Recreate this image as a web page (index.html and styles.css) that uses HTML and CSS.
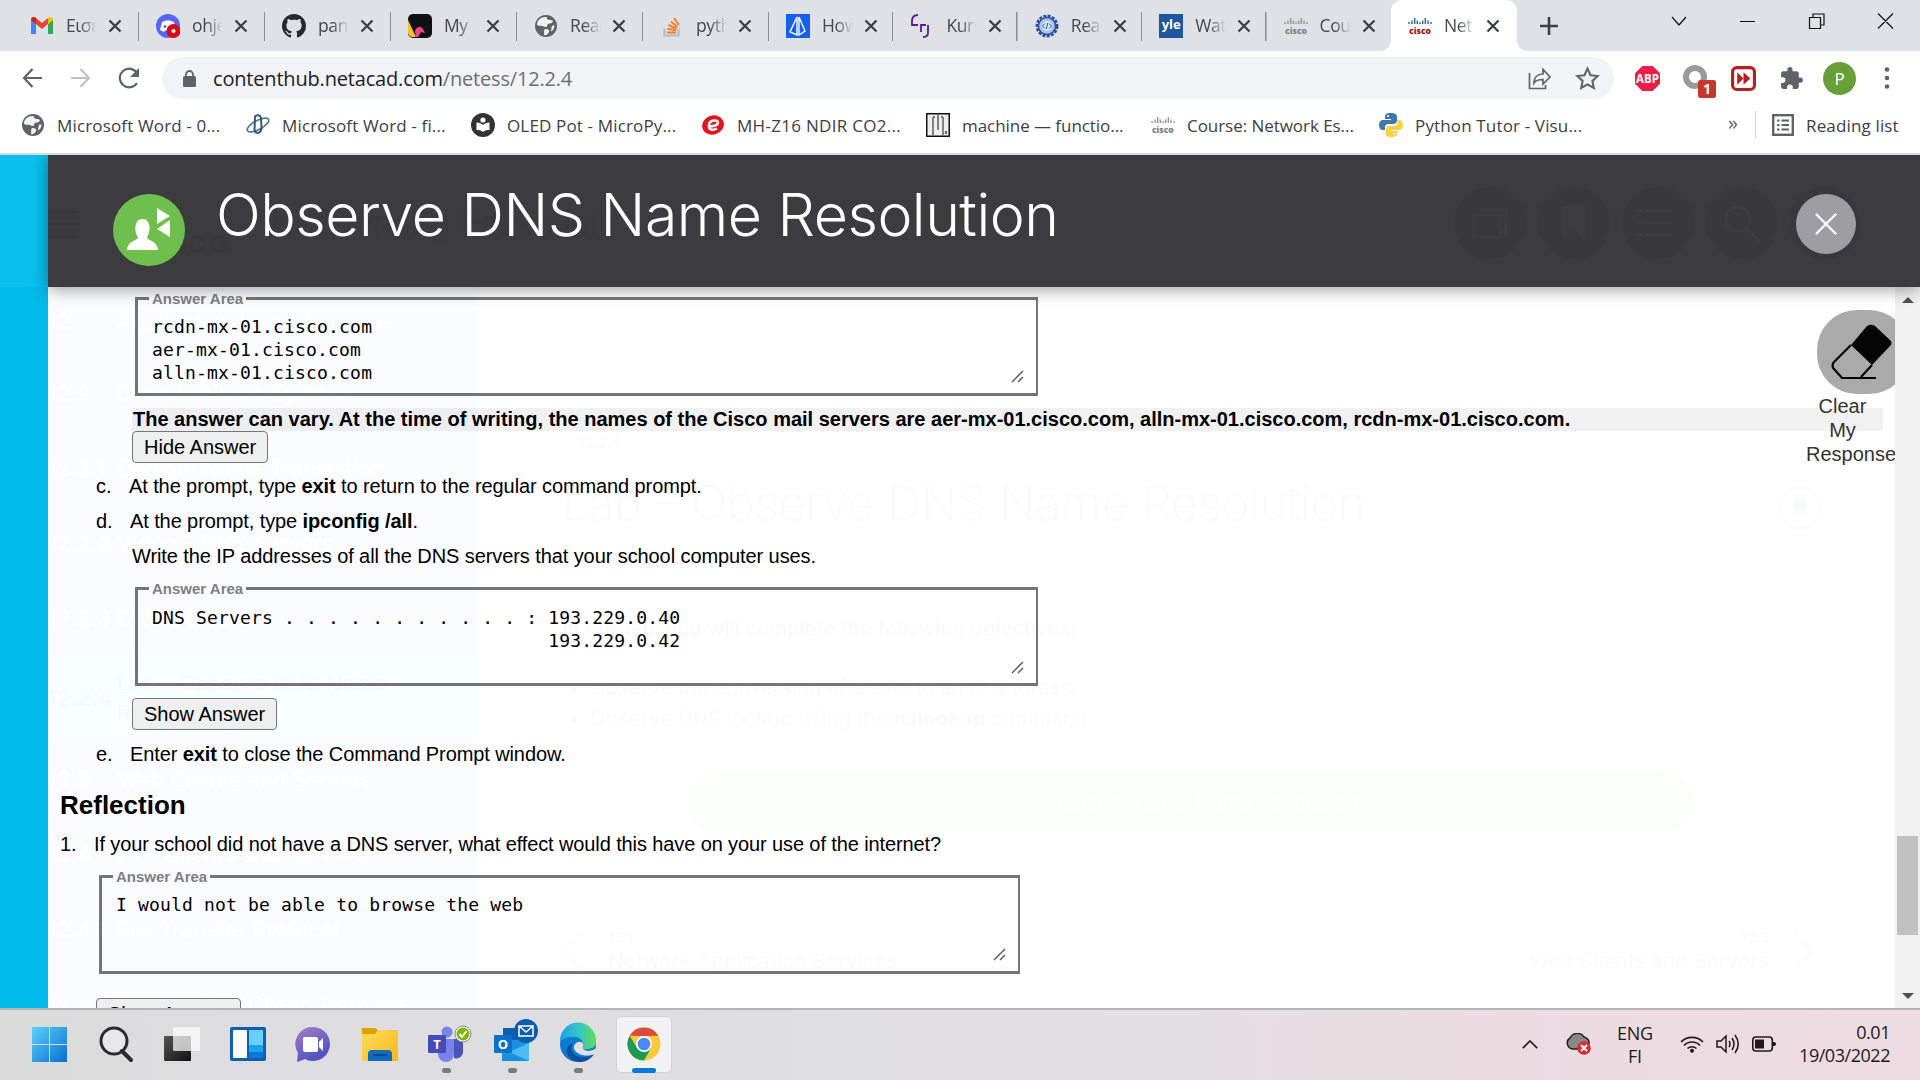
FILE: index.html
```html
<!DOCTYPE html>
<html lang="en">
<head>
<meta charset="utf-8">
<title>Networking Essentials</title>
<link rel="stylesheet" href="styles.css">
</head>
<body>
<svg width="0" height="0" class="defs">
  <defs>
    <symbol id="x" viewBox="0 0 14 14"><path d="M1.500 1.500l11 11M12.500 1.500l-11 11" stroke="#3c4043" stroke-width="2.300" fill="none"/></symbol>
    <symbol id="globe" viewBox="0 0 24 24"><circle cx="12" cy="12" r="11" fill="#5f6368"/><path d="M13 3c-1 2 1 3 4 3l2 1c-1 3-3 2-5 3s0 3-2 3-3-2-6-1l-3-1c0-5 4-8.500 10-8zM11 15c3 0 5 1 4 3s-3 4-5 3c1-2-1-3 1-6zM18.500 11.500l2 0c0 3-1.500 5-3.500 6 .500-2 0-4 1.500-6z" fill="#fff" opacity=".92"/></symbol>
    <symbol id="cisco" viewBox="0 0 24 24"><path d="M1 6v2M4 4.500V8M6.700 2v6M9.300 4.500V8M12 6v2M14.700 4.500V8M17.300 2v6M20 4.500V8M23 6v2" stroke="currentColor" stroke-width="1.300" transform="translate(0 2)"/><text x="12" y="19.500" font-family="Open Sans" font-size="8.600" font-weight="800" text-anchor="middle" textLength="22">cisco</text></symbol>
    <symbol id="user" viewBox="0 0 72 72"><path d="M25 43c-4-5-4-18 4.500-18s8.500 13 4.500 18c0 4 10 3 11 13H14c1-10 11-9 11-13z"/><path d="M44 14l13 8-13 8zM57 26v17l-13-8z"/></symbol>
    <symbol id="grip" viewBox="0 0 13 13"><path d="M1 12L12 1M7 12l5-5" stroke="#555" stroke-width="1.400"/></symbol>
  </defs>
</svg>

<div class="tabs">
  <div class="tab"><svg class="ic" viewBox="0 0 24 24"><path d="M1 20V6l5 4v10z" fill="#4285f4"/><path d="M18 20V10l5-4v14z" fill="#34a853"/><path d="M1 6c0-3 3-4 5-2l6 5 6-5v6l-6 5-6-5z" fill="#ea4335"/><path d="M1 6c0-3 3-4 5-2v6z" fill="#c5221f"/><path d="M18 4c2-2 5-1 5 2l-5 4z" fill="#fbbc04"/></svg><span class="tt">Εισε</span><svg class="x"><use href="#x"/></svg></div>
  <div class="tab"><svg class="ic" viewBox="0 0 24 24"><circle cx="12" cy="12" r="12" fill="#5865f2"/><path d="M6 8l4-1.500h4l4 1.500 2 8-4 2-1-1.500H9L8 18l-4-2z" fill="#fff"/><circle cx="9" cy="12.500" r="1.500" fill="#5865f2"/><circle cx="17.500" cy="17" r="7" fill="#dd0a14"/><circle cx="17.500" cy="17" r="2" fill="#fff"/></svg><span class="tt">ohje</span><svg class="x"><use href="#x"/></svg></div>
  <div class="tab"><svg class="ic" viewBox="0 0 16 16"><path fill="#24292f" d="M8 0C3.580 0 0 3.580 0 8c0 3.540 2.290 6.530 5.470 7.590.4.070.55-.17.55-.38 0-.19-.01-.82-.01-1.490-2.010.37-2.530-.49-2.690-.94-.09-.23-.48-.94-.82-1.130-.28-.15-.68-.52-.01-.53.63-.01 1.080.58 1.230.82.72 1.210 1.870.87 2.330.66.070-.52.28-.87.51-1.070-1.780-.2-3.640-.89-3.640-3.950 0-.87.31-1.590.82-2.150-.08-.2-.36-1.020.08-2.120 0 0 .67-.21 2.200.82.64-.18 1.320-.27 2-.27s1.360.09 2 .27c1.530-1.040 2.200-.82 2.200-.82.44 1.100.16 1.920.08 2.120.51.56.82 1.270.82 2.150 0 3.070-1.870 3.750-3.650 3.950.29.25.54.73.54 1.480 0 1.070-.01 1.930-.01 2.200 0 .21.150.46.55.38A8 8 0 0 0 16 8c0-4.420-3.580-8-8-8z"/></svg><span class="tt">pan</span><svg class="x"><use href="#x"/></svg></div>
  <div class="tab"><svg class="ic" viewBox="0 0 24 24"><rect width="24" height="24" rx="5" fill="#111"/><path d="M0 6l8 17H5c-3 0-5-2-5-5z" fill="#fbc02d"/><path d="M7 18c0-4 5-7 8-3l2 4-4-1-3 5H8z" fill="#f0418c"/></svg><span class="tt">My</span><svg class="x"><use href="#x"/></svg></div>
  <div class="tab"><svg class="ic"><use href="#globe"/></svg><span class="tt">Read</span><svg class="x"><use href="#x"/></svg></div>
  <div class="tab"><svg class="ic" viewBox="0 0 24 24"><path d="M4.500 14.500v7h14v-7" stroke="#bcbbbb" stroke-width="2.200" fill="none"/><path d="M7 18.500h9M7.300 14.800l8.800 1.500M8.500 11l8 3.500M10.800 7.400l6.700 5.500M14 4l5 7" stroke="#f48024" stroke-width="2"/></svg><span class="tt">pyth</span><svg class="x"><use href="#x"/></svg></div>
  <div class="tab"><svg class="ic" viewBox="0 0 24 24"><rect width="24" height="24" fill="#1660f0"/><path d="M11 3L4 18l7 3zM13 3l6 14-6 4z" fill="none" stroke="#fff" stroke-width="1.400"/></svg><span class="tt">How</span><svg class="x"><use href="#x"/></svg></div>
  <div class="tab"><svg class="ic" viewBox="0 0 24 24"><path d="M8 1C4 1 2 3 2 7v4h6M11 18v-7h5M18 11v8c0 3-2 4-5 4" fill="none" stroke="#5b1a96" stroke-width="1.800"/></svg><span class="tt">Kurs</span><svg class="x"><use href="#x"/></svg></div>
  <div class="tab"><svg class="ic" viewBox="0 0 24 24"><circle cx="12" cy="12" r="10.200" fill="none" stroke="#2c4a9c" stroke-width="2.400" stroke-dasharray="3 1.400"/><circle cx="12" cy="12" r="8.600" fill="#a9c3ea" stroke="#2c4a9c" stroke-width="1.500"/><circle cx="12" cy="12" r="5" fill="#dbe7fa"/><path d="M10 9.500L7.500 12l2.500 2.500M14 9.500l2.500 2.500-2.500 2.500M12.700 9l-1.400 6" stroke="#2c4a9c" fill="none"/></svg><span class="tt">Real</span><svg class="x"><use href="#x"/></svg></div>
  <div class="tab"><span class="ic yle">yle</span><span class="tt">Wat</span><svg class="x"><use href="#x"/></svg></div>
  <div class="tab last"><svg class="ic cg"><use href="#cisco"/></svg><span class="tt">Cou</span><svg class="x"><use href="#x"/></svg></div>
  <div class="tab active"><svg class="ic cc"><use href="#cisco"/></svg><span class="tt">Net</span><svg class="x"><use href="#x"/></svg></div>
  <svg class="plus" viewBox="0 0 18 18"><path d="M9 0v18M0 9h18" stroke="#3c4043" stroke-width="2.600"/></svg>
  <svg class="wc" viewBox="0 0 224 20"><path d="M1 6l7 8 7-8M69 10.500h15M207 2.500l15 15M222 2.500l-15 15M138.500 6.500h11v11h-11zM142 6V3h11v11h-3" fill="none" stroke="#111" stroke-width="1.200"/></svg>
</div>

<div class="bar">
  <svg class="nav" viewBox="0 0 120 24"><g fill="none" stroke-width="2.200"><path d="M20 12H2M10.500 3L2 12l8.500 9" stroke="#5f6368"/><path d="M49 12h18M58.500 3L67 12l-8.500 9" stroke="#bdc1c6"/><path d="M115 17a9.300 9.300 0 1 1 0-10" stroke="#5f6368"/></g><path d="M117 2v9h-9z" fill="#5f6368"/></svg>
  <div class="omni">
    <svg class="lock" viewBox="0 0 13 17"><rect y="6" width="13" height="11" rx="1.500" fill="#5f6368"/><path d="M3 7V4.500a3.500 3.500 0 0 1 7 0V7" fill="none" stroke="#5f6368" stroke-width="1.800"/></svg>
    <span class="url">contenthub.netacad.com<i>/netess/12.2.4</i></span>
    <svg class="share" viewBox="0 0 24 24"><path d="M1.500 7v15.500h16V19M6 17c0-6 4-9 9-9V3.500l7 7.500-7 7v-4.500c-4 0-7 .5-9 3.500z" fill="none" stroke="#5f6368" stroke-width="1.700"/></svg>
    <svg class="star" viewBox="0 0 24 24"><path d="M12 2.500l2.900 6.300 6.800.8-5 4.700 1.300 6.700-6-3.400-6 3.400 1.300-6.700-5-4.700 6.800-.8z" fill="none" stroke="#5f6368" stroke-width="2"/></svg>
  </div>
  <div class="ext">
    <svg viewBox="0 0 24 24"><path d="M7 0h10l7 7v10l-7 7H7l-7-7V7z" fill="#ed1e45"/><text x="12" y="16.500" font-family="Open Sans" font-size="12" font-weight="700" fill="#fff" text-anchor="middle" textLength="22" lengthAdjust="spacingAndGlyphs">ABP</text></svg>
    <svg class="rec" viewBox="0 0 34 36"><circle cx="12" cy="14" r="9" fill="none" stroke="#9a9a9a" stroke-width="6"/><rect x="15" y="17" width="18" height="18" rx="2.500" fill="#c5372c"/><text x="24" y="31" font-family="Open Sans" font-size="14" font-weight="700" fill="#fff" text-anchor="middle">1</text></svg>
    <svg viewBox="0 0 24 24"><rect x="1.500" y="1.500" width="21" height="21" rx="4" fill="#fff" stroke="#b5201c" stroke-width="3"/><path d="M6 6l6 6-6 6zM12 6l6.500 6-6.500 6z" fill="#b5201c"/></svg>
    <svg viewBox="0 0 24 24"><path fill="#5f6368" d="M20.500 11H19V7a2 2 0 0 0-2-2h-4V3.500a2.500 2.500 0 0 0-5 0V5H4a2 2 0 0 0-2 2v3.800h1.500a2.700 2.700 0 0 1 0 5.400H2V20a2 2 0 0 0 2 2h3.800v-1.500a2.700 2.700 0 0 1 5.400 0V22H17a2 2 0 0 0 2-2v-4h1.500a2.500 2.500 0 0 0 0-5z"/></svg>
    <span class="me">P</span>
    <svg class="dots" viewBox="0 0 6 22"><g fill="#5f6368"><circle cx="3" cy="2.500" r="2.300"/><circle cx="3" cy="11" r="2.300"/><circle cx="3" cy="19.500" r="2.300"/></g></svg>
  </div>
</div>

<div class="marks">
  <div class="mk"><svg class="ic"><use href="#globe"/></svg><span>Microsoft Word - 0...</span></div>
  <div class="mk"><svg class="ic" viewBox="0 0 24 24"><g fill="none" stroke="#4b7391" stroke-width="1.600"><ellipse cx="12" cy="12" rx="12" ry="4.500" transform="rotate(-28 12 12)"/><path d="M9 3.500c2-2 5-1.500 6 1l.5 11c-1 5-5 6-7 2z" stroke="#2d5a7c" stroke-width="2"/></g></svg><span>Microsoft Word - fi...</span></div>
  <div class="mk"><svg class="ic" viewBox="0 0 24 24"><circle cx="12" cy="12" r="12" fill="#333"/><circle cx="12" cy="7" r="2.600" fill="#fff"/><path d="M5.500 9.500c3 0 5 1 6.500 2.500 1.500-1.500 3.500-2.500 6.500-2.500V17c-3 0-5 .5-6.500 2-1.500-1.500-3.500-2-6.500-2z" fill="#fff"/></svg><span>OLED Pot - MicroPy...</span></div>
  <div class="mk"><svg class="ic" viewBox="0 0 24 24"><ellipse cx="12" cy="12" rx="11" ry="9.500" fill="#e3151d" transform="rotate(-18 12 12)"/><path d="M7 13.500c4 0 10-1 10-4s-8-3-9 2 3 6.500 8 4" fill="none" stroke="#fff" stroke-width="2.500"/></svg><span class="wide">MH-Z16 NDIR CO2...</span></div>
  <div class="mk"><svg class="ic" viewBox="0 0 24 24"><rect x=".75" y=".75" width="22.500" height="22.500" fill="#eee" stroke="#111" stroke-width="1.500"/><path d="M7 4v19M12 1v16M17 4v19M7 4h2M15 4h2" stroke="#777" stroke-width="1.800"/><path d="M20 18v3" stroke="#333" stroke-width="1.500"/></svg><span class="tight">machine — functio...</span></div>
  <div class="mk"><svg class="ic cg"><use href="#cisco"/></svg><span class="tight">Course: Network Es...</span></div>
  <div class="mk"><svg class="ic" viewBox="0 0 24 24"><path d="M12 0c-5 0-6 1.500-6 3.500V6h6v1H4C1.500 7 0 9 0 12s1.500 5 4 5h2v-3c0-2 1.500-3 3.500-3h5c2 0 3.500-1.500 3.500-3.500v-4C18 1.500 16 0 12 0z" fill="#3c78aa"/><path d="M12 24c5 0 6-1.500 6-3.500V18h-6v-1h8c2.500 0 4-2 4-5s-1.500-5-4-5h-1.500v3c0 2-1.500 3-3.500 3h-5c-2 0-3.500 1.500-3.500 3.500v4C6.500 22.500 8 24 12 24z" fill="#fdd140"/><circle cx="9" cy="3" r="1.100" fill="#fff"/><circle cx="15" cy="21" r="1.100" fill="#fff"/></svg><span>Python Tutor - Visu...</span></div>
  <span class="more">»</span>
  <div class="rl"><svg class="ric" viewBox="0 0 22 22"><rect x="1.200" y="1.200" width="19.600" height="19.600" fill="none" stroke="#5f6368" stroke-width="2.400"/><path d="M5 6.500h2.500M9.500 6.500H17M5 11h2.500M9.500 11H17M5 15.500h2.500M9.500 15.500H17" stroke="#5f6368" stroke-width="2"/></svg><span>Reading list</span></div>
</div>

<div class="page">
  <div class="rail"></div>
  <header class="head">
    <svg class="ghosthead" viewBox="0 0 1872 132"><g fill="#39393b"><circle cx="1442" cy="68" r="36"/><circle cx="1526" cy="68" r="36"/><circle cx="1610" cy="68" r="36"/><circle cx="1694" cy="68" r="36"/><circle cx="1777" cy="68" r="36"/></g><g fill="none" stroke="#3d3d3f" stroke-width="3"><path d="M1426 60h26v22h-26zM1432 55h26v22h-4M1598 56h26M1598 68h26M1598 80h26M1588 56h6M1588 68h6M1588 80h6"/><circle cx="1690" cy="64" r="12"/><path d="M1698 73l13 13"/></g><path d="M1514 51h24v34l-12-10-12 10z" fill="#3d3d3f"/><path d="M0 57h31M0 69h31M0 82h31" stroke="#38383a" stroke-width="3"/><text x="222" y="80" font-family="Inter" font-weight="300" font-size="34" fill="#3a3a3c" textLength="345">Networking Essentials</text><text x="90" y="98" font-family="Inter" font-weight="800" font-size="32" fill="#39393b" textLength="90">cisco</text></svg>
    <div class="badge"><svg><use href="#user"/></svg></div>
    <h1>Observe DNS Name Resolution</h1>
    <div class="close"><svg viewBox="0 0 22 22"><path d="M1.500 1.500l19 19M20.500 1.500l-19 19" stroke="#fff" stroke-width="2.300" stroke-linecap="round"/></svg></div>
  </header>
  <div class="under">
    <div class="toc">
      <p><b>12</b>Application Layer Services</p>
      <p><b>12.2</b>Domain Name System</p>
      <p><b>12.2.1</b>Domain Name Translation</p>
      <p><b>12.2.2</b>Video – DNS Servers</p>
      <p><b>12.2.3</b>DNS Servers</p>
      <p class="cur"><b>12.2.4</b>Lab – Observe DNS Name<br>Resolution</p>
      <p><b>12.3</b>Web Clients and Servers</p>
      <p><b>12.4</b>FTP Clients and Servers</p>
      <p><b>12.4.1</b>File Transfer Protocol</p>
      <p><b>12.4.2</b>Video – FTP Client Software</p>
    </div>
    <div class="lesson">
      <small>12.2.4</small>
      <div class="lt"><span>Lab – Observe DNS Name Resolution</span><svg viewBox="0 0 44 44"><circle cx="22" cy="22" r="20.500" fill="none" stroke="#f9f9f9" stroke-width="1.500"/><path d="M16 13h12v16l-6-5-6 5z" fill="#f9fbfb"/></svg></div>
      <p class="obj">In this lab, you will complete the following objectives:</p>
      <ul><li>Observe the conversion of a URL to an IP address.</li><li>Observe DNS lookup using the <b>nslookup</b> command.</li></ul>
      <div class="pill"><svg><use href="#user"/></svg>Observe DNS Name Resolution</div>
      <div class="pn"><svg viewBox="0 0 24 42"><path d="M21 2L3 21l18 19" fill="none" stroke="#f9fbfc" stroke-width="2"/></svg><div><small>12.1</small>Network Application Services</div><div class="nx"><small>12.3</small>Web Clients and Servers</div><svg viewBox="0 0 24 42"><path d="M3 2l18 19L3 40" fill="none" stroke="#f9fbfc" stroke-width="2"/></svg></div>
    </div>
  </div>
  <main class="doc">
    <fieldset class="f1"><legend>Answer Area</legend><pre>rcdn-mx-01.cisco.com
aer-mx-01.cisco.com
alln-mx-01.cisco.com</pre><svg class="grip"><use href="#grip"/></svg></fieldset>
    <div class="ans">The answer can vary. At the time of writing, the names of the Cisco mail servers are aer-mx-01.cisco.com, alln-mx-01.cisco.com, rcdn-mx-01.cisco.com.</div>
    <button>Hide Answer</button>
    <p class="row"><em>c.</em><span>At the prompt, type <b>exit</b> to return to the regular command prompt.</span></p>
    <p class="row d"><em>d.</em><span>At the prompt, type <b>ipconfig /all</b>.</span></p>
    <p class="row w"><span>Write the IP addresses of all the DNS servers that your school computer uses.</span></p>
    <fieldset class="f2"><legend>Answer Area</legend><pre>DNS Servers . . . . . . . . . . . : 193.229.0.40
                                    193.229.0.42</pre><svg class="grip"><use href="#grip"/></svg></fieldset>
    <button class="b2">Show Answer</button>
    <p class="row d e"><em>e.</em><span>Enter <b>exit</b> to close the Command Prompt window.</span></p>
    <h2>Reflection</h2>
    <p class="row q"><em>1.</em><span>If your school did not have a DNS server, what effect would this have on your use of the internet?</span></p>
    <fieldset class="f3"><legend>Answer Area</legend><pre>I would not be able to browse the web</pre><svg class="grip"><use href="#grip"/></svg></fieldset>
    <button class="b3">Show Answer</button>
    <div class="clear"><div class="er"><svg viewBox="0 0 62 56"><path d="M36 2q4-2.500 8 0l15 14q3 3 0 6L41 41 20 21z" fill="#050505"/><path d="M20 21L3 38q-3 3.500 0 7l8 9h34M41 41L30 53" fill="none" stroke="#050505" stroke-width="2.200"/></svg></div><p>Clear My Response</p></div>
  </main>
  <div class="scroll"><svg viewBox="0 0 12 6"><path d="M0 6l6-6 6 6z" fill="#505050"/></svg><div class="thumb"></div><svg viewBox="0 0 12 6"><path d="M0 0l6 6 6-6z" fill="#505050"/></svg></div>
</div>

<footer class="task">
  <svg class="apps" viewBox="0 0 700 70" width="700" height="70">
    <defs>
      <linearGradient id="g0" gradientUnits="userSpaceOnUse" x1="32" y1="17" x2="67" y2="52"><stop stop-color="#5ad0fb"/><stop offset="1" stop-color="#0a6fd0"/></linearGradient>
      <linearGradient id="g2" y2="1" x2=".6"><stop stop-color="#a57fc8"/><stop offset="1" stop-color="#4a50c0"/></linearGradient>
      <linearGradient id="g3" y2="1" x2="1"><stop stop-color="#ffdc5c"/><stop offset="1" stop-color="#f9b71c"/></linearGradient>
      <linearGradient id="g4" x2="1"><stop stop-color="#1a9fe8"/><stop offset=".5" stop-color="#34c6c8"/><stop offset="1" stop-color="#62dc5a"/></linearGradient>
      <linearGradient id="g5" x2="1" y2="1"><stop stop-color="#555"/><stop offset="1" stop-color="#111"/></linearGradient>
    </defs>
    <path d="M32 17h17v17H32zM50 17h17v17H50zM32 35h17v17H32zM50 35h17v17H50z" fill="url(#g0)"/>
    <circle cx="114" cy="31" r="13" fill="#e8e8ea" stroke="#2b2b2b" stroke-width="3"/><path d="M122 41l9 9" stroke="#2b2b2b" stroke-width="4" stroke-linecap="round"/>
    <rect x="164" y="26" width="27" height="25" rx="1" fill="url(#g5)"/><rect x="173" y="17" width="27" height="24" rx="1" fill="#fff" opacity=".72"/>
    <rect x="230" y="17" width="36" height="34" rx="2" fill="#0f5fae"/><rect x="233" y="20" width="14" height="28" rx="1" fill="#fafafa"/><rect x="249" y="20" width="14" height="15" fill="#66d2fb"/><path d="M249 35h14v7h-14z" fill="#1fa0ee"/><path d="M249 42h14v6h-14z" fill="#0c78d8"/>
    <path d="M313 17a17 17 0 1 1-8 32l-8 3 1-9a17 17 0 0 1 15-26z" fill="url(#g2)"/><rect x="303" y="27" width="15" height="15" rx="2" fill="#fff"/><path d="M319 32l4-4v13l-4-4z" fill="#fff"/>
    <path d="M362 24h13l3-4h18a2 2 0 0 1 2 2v29h-36z" fill="url(#g3)"/><path d="M362 18h13l3 2-3 4h-13z" fill="#e0a100"/><path d="M368 51v-7a4 4 0 0 1 4-4h16a4 4 0 0 1 4 4v7z" fill="#0f6cbd"/><path d="M373 45h14" stroke="#084a8b" stroke-width="2"/>
    <circle cx="447" cy="22" r="5.500" fill="#7b83eb"/><path d="M454 29h9v14a7 7 0 0 1-9 5z" fill="#4b53bc"/><path d="M438 29h16v15a8 8 0 0 1-16 0z" fill="#7b83eb"/><rect x="428" y="25" width="18" height="18" rx="1" fill="#454cb5"/><text x="437" y="39" fill="#fff" font-family="Open Sans" font-weight="700" font-size="13" text-anchor="middle">T</text><circle cx="463" cy="24" r="8" fill="#fff" stroke="#888"/><circle cx="463" cy="24" r="6.500" fill="#7ab800"/><path d="M459.500 24l2.500 3 4.500-6" stroke="#fff" stroke-width="2" fill="none"/>
    <path d="M503 18h20v14h-20z" fill="#0a5fb4"/><path d="M502 30h27v21h-27z" fill="#1a8fe0"/><path d="M529 33v18l-20-9z" fill="#4cbcf2"/><rect x="494" y="25" width="18" height="18" rx="1" fill="#0a70c8"/><text x="503" y="39" fill="#fff" font-family="Open Sans" font-weight="700" font-size="13" text-anchor="middle">O</text><circle cx="526" cy="21" r="12" fill="#0a5cb0"/><path d="M519 16h14v10h-14zM519 16l7 6 7-6" fill="none" stroke="#fff" stroke-width="1.500"/>
    <circle cx="578" cy="34" r="18" fill="#0b7ad2"/><path d="M560 31a18 18 0 0 1 36-1c1 7-5 10-13 9-2-1 0-2 0-5 0-8-13-10-23-3z" fill="url(#g4)"/><path d="M573 33c-5 8 2 15 12 14 4 0 6-2 9-3-5 8-13 9-19 7-11-4-10-16-2-18z" fill="#0e4f9c"/><path d="M583 39c3 3 9 2 12 0l1 4c-9 5-19 2-22-4-1-4 3-8 7-7 4 2 1 5 2 7z" fill="#e0e0e3"/>
    <rect x="616.500" y="6.500" width="55" height="56" rx="5" fill="#f2f2f4" stroke="#d2d2d5"/>
    <circle cx="644" cy="34" r="16.500" fill="#fbc93c"/><path d="M629.700 25.700A16.500 16.500 0 0 1 658.300 25.700L644 26z" fill="#d94b3e"/><path d="M629.700 25.700A16.500 16.500 0 0 0 644 50.500L651 38 637 38z" fill="#1a9c55"/><circle cx="644" cy="34" r="8" fill="#fff"/><circle cx="644" cy="34" r="6.300" fill="#4a8af4"/>
    <g fill="#7a7a7c"><rect x="442" y="58" width="9" height="5" rx="2.500"/><rect x="508" y="58" width="9" height="5" rx="2.500"/><rect x="574" y="58" width="9" height="5" rx="2.500"/></g><rect x="632" y="58" width="24" height="5" rx="2.500" fill="#0a78d4"/>
  </svg>
  <div class="tray">
    <svg width="16" height="9" viewBox="0 0 16 9"><path d="M.8 8.200L8 1l7.200 7.200" fill="none" stroke="#222" stroke-width="1.700"/></svg>
    <svg class="cloud" width="25" height="22" viewBox="0 0 25 22"><path d="M7 16a6 6 0 0 1-3-11 8 8 0 0 1 14-1 6 6 0 0 1 5 7l-5 5z" fill="#888" stroke="#222" stroke-width="1.500"/><circle cx="18" cy="15" r="6.800" fill="#dc2a30"/><path d="M15 12l6 6M21 12l-6 6" stroke="#fff" stroke-width="2"/></svg>
    <div class="lang">ENG<br>FI</div>
    <svg class="wifi" width="24" height="18" viewBox="0 0 24 18"><g fill="none" stroke="#1b1b1b" stroke-width="1.600"><path d="M1 7a15.500 15.500 0 0 1 22 0M4 10.500a11 11 0 0 1 16 0M7.500 13.500a6.500 6.500 0 0 1 9 0"/></g><circle cx="12" cy="15.800" r="2" fill="#1b1b1b"/></svg>
    <svg class="snd" width="24" height="20" viewBox="0 0 24 20"><path d="M1 7h4l5-5v16l-5-5H1zM13 7q2 3 0 6M16 4q4 6 0 12M19 1q6.500 9 0 18" fill="none" stroke="#1b1b1b" stroke-width="1.500"/></svg>
    <svg class="bat" width="24" height="16" viewBox="0 0 24 16"><rect x=".8" y="1" width="19.500" height="14" rx="3" fill="none" stroke="#1b1b1b" stroke-width="1.600"/><rect x="3" y="3.500" width="9" height="9" fill="#1b1b1b"/><path d="M21 6h1q2 0 2 2t-2 2h-1z" fill="#1b1b1b"/></svg>
    <div class="time">0.01<br>19/03/2022</div>
  </div>
</footer>
</body>
</html>
```
FILE: styles.css
```css
* { box-sizing: border-box; }
body { margin: 0; width: 1920px; height: 1080px; overflow: hidden; background: #fff; font-family: "Liberation Sans", Arial, sans-serif; color: #000; }
p, h1, h2, pre, ul { margin: 0; padding: 0; }
.defs { position: absolute; }
svg { flex: none; display: block; }

/* tab strip */
.tabs { display: flex; align-items: center; height: 51px; padding-left: 13px; background: #dee1e6; font-family: "Open Sans", sans-serif; }
.tab { display: flex; align-items: center; width: 124.400px; height: 51px; padding-left: 17px; flex: none; background: linear-gradient(#8a8d92, #8a8d92) no-repeat right 12px / 1.500px 29px; }
.tab:nth-child(-n+6), .tab.active { width: 126px; }
.tab.last { background: none; }
.tab.active { position: relative; background: #fff; border-radius: 11px 11px 0 0; }
.tab.active::before, .tab.active::after { content: ""; position: absolute; bottom: 0; width: 10px; height: 10px; }
.tab.active::before { left: -10px; background: radial-gradient(circle at 0 0, transparent 9.500px, #fff 10px); }
.tab.active::after { right: -10px; background: radial-gradient(circle at 100% 0, transparent 9.500px, #fff 10px); }
.ic { width: 24px; height: 24px; flex: none; }
.tt { width: 31px; margin: 0 11px 0 12px; overflow: hidden; white-space: nowrap; font-size: 17.500px; line-height: 24px; margin-top: -1px; letter-spacing: -.4px; color: #45474a; -webkit-mask-image: linear-gradient(90deg, #000 45%, transparent 100%); mask-image: linear-gradient(90deg, #000 45%, transparent 100%); }
.x { width: 14px; height: 14px; }
.yle { display: flex; align-items: center; justify-content: center; background: #1f56a0; color: #fff; font-size: 13px; font-weight: 700; line-height: 1; padding-bottom: 2px; }
.cg { color: #8b8e93; fill: #80838a; }
.cc { color: #1d5b78; fill: #a3131a; }
.plus { width: 18px; height: 18px; margin-left: 23px; }
.wc { width: 224px; height: 20px; margin: 0 0 9px 113px; }

/* address bar */
.bar { display: flex; align-items: center; height: 54px; }
.nav { width: 120px; height: 24px; margin-left: 22px; }
.omni { display: flex; align-items: center; width: 1452px; height: 42px; margin-left: 20px; padding: 0 14px 0 21px; border-radius: 21px; background: #f1f3f4; }
.lock { width: 13px; height: 17px; }
.url { margin-left: 17px; font: 20px "Open Sans", sans-serif; letter-spacing: -.18px; color: #202124; }
.url i { font-style: normal; color: #6b6f74; }
.share { width: 24px; height: 24px; margin-left: auto; }
.star { width: 25px; height: 25px; margin-left: 23px; }
.ext { display: flex; align-items: center; margin-left: 21px; }
.ext svg { width: 25px; height: 25px; margin-right: 23px; }
.ext .rec { width: 34px; height: 36px; margin: 6px 14px 0 0; }
.me { display: flex; align-items: center; justify-content: center; width: 33px; height: 33px; margin-left: -4px; border-radius: 50%; background: #689f38; color: #fff; font: 17px "Open Sans", sans-serif; }
.ext .dots { width: 6px; height: 24px; margin: 0 0 0 28px; }

/* bookmarks */
.marks { display: grid; grid-template-columns: 225px 225px 230px 225px 225px 228px 349px 27px auto; align-items: center; height: 50px; padding: 0 0 8px 21px; border-bottom: 2px solid #dadada; font: 17px "Open Sans", sans-serif; letter-spacing: .15px; color: #3c4043; white-space: nowrap; }
.mk { display: flex; align-items: center; gap: 12px; }
.wide { letter-spacing: .3px; }
.tight { letter-spacing: -.05px; }
.more { font-size: 20px; line-height: 20px; padding-bottom: 4px; color: #5f6368; }
.rl { display: flex; align-items: center; gap: 12px; height: 28px; padding-left: 16px; border-left: 1px solid #cfd1d4; }
.ric { width: 22px; height: 22px; }

/* page */
.page { position: relative; display: grid; grid-template: 132px 721px / 48px 1847px 25px; height: 853px; overflow: hidden; }
.rail { grid-row: 1 / 3; background: linear-gradient(#09bfee 132px, #00baea 132px); }
.head { position: relative; z-index: 2; grid-column: 2 / 4; display: flex; background: linear-gradient(#363c40 5px, #3c3c3e 5px); box-shadow: 0 2px 16px rgba(0,0,0,.4); }
.ghosthead { position: absolute; inset: 0; width: 1872px; height: 132px; }
.badge { position: relative; width: 72px; height: 72px; margin: 39px 0 0 65px; border-radius: 50%; background: #6fbf4f; }
.badge svg { width: 72px; height: 72px; fill: #fff; }
.head h1 { position: relative; margin: 24px 0 0 31px; font: 260 59px/72px Inter, sans-serif; letter-spacing: -.5px; color: #fff; white-space: nowrap; }
.close { position: relative; display: flex; align-items: center; justify-content: center; width: 60px; height: 60px; margin: 39px 64px 0 auto; border-radius: 50%; background: #9e9ea2; }
.close svg { width: 22px; height: 22px; }
.doc, .under { grid-area: 2 / 2; }
.doc { position: relative; overflow: hidden; display: flex; flex-direction: column; align-items: flex-start; font-size: 20px; padding: 2px 12px 0 84px; }

/* faded course page behind the activity */
.under { display: flex; font-family: Inter, sans-serif; overflow: hidden; }
.toc { width: 431px; background: #fbfcfd; color: #fff; font-size: 22px; }
.toc p { display: flex; align-items: center; height: 75px; white-space: nowrap; }
.toc p:first-child { height: 68px; }
.toc b { width: 69px; flex: none; font-weight: 500; }
.toc .cur { height: 86px; background: #f9fefe; color: #f7fafb; line-height: 30px; }
.lesson { flex: 1; padding-left: 83px; color: #fafafa; font-size: 20.500px; }
.lesson small { display: block; font-size: 15px; line-height: 20px; }
.lesson > small { margin: 146px 0 0 16px; }
.lt { display: flex; align-items: center; justify-content: space-between; height: 72px; margin-top: 19px; padding-right: 73px; font-size: 47px; font-weight: 200; }
.lt span { padding-bottom: 11px; }
.lt svg { width: 44px; height: 44px; }
.obj { margin-top: 70px; line-height: 30px; }
.lesson ul { margin-top: 28px; padding-left: 28px; line-height: 31px; }
.pill { display: flex; align-items: center; justify-content: center; gap: 8px; width: 1005px; height: 60px; margin: 38px 0 0 125px; border-radius: 30px; background: #fcfefb; color: #fff; }
.pill svg { width: 30px; height: 30px; fill: #fff; }
.pn { display: flex; align-items: center; gap: 22px; margin-top: 96px; padding-right: 80px; font-size: 20.700px; }
.pn svg { width: 24px; height: 42px; }
.nx { margin-left: auto; text-align: right; }

/* answers */
fieldset { position: relative; width: 903px; height: 107px; margin: 0 0 0 3px; padding: 8px 0 0 11px; border: 3px solid #757575; border-right-width: 2.500px; min-width: 0; flex: none; }
legend { padding: 0 3px; font: 700 15px/19px "Liberation Sans", Arial, sans-serif; color: #7f7f7f; }
pre { height: 77px; padding-left: 3px; font: 18px/23px "DejaVu Sans Mono", monospace; letter-spacing: .17px; }
.grip { position: absolute; right: 12px; bottom: 9px; width: 13px; height: 13px; }
.f1 { padding-top: 7px; }
.ans { flex: none; align-self: stretch; height: 23px; margin-top: 12px; padding-left: 1px; background: rgba(0,0,0,.055); font-weight: 700; line-height: 23px; white-space: nowrap; }
button { flex: none; height: 32px; padding: 0 11px; border: 1.500px solid #767676; border-radius: 4px; background: #eeefef; font: 20px "Liberation Sans", Arial, sans-serif; color: #000; }
.row { flex: none; display: flex; align-items: center; height: 35px; margin-left: -36px; white-space: nowrap; letter-spacing: -.1px; }
.row em { width: 33px; font-style: normal; }
.row.d em, .row.q em { width: 34px; }
button + .row { margin-top: 6px; }
.row.w { margin-left: 0; letter-spacing: -.087px; }
.f2 { margin-top: 5px; }
.b2 { margin-top: 12px; }
button + .e { margin-top: 7px; }
h2 { flex: none; margin: 13px 0 0 -72px; font: 700 26px/40px "Liberation Sans", Arial, sans-serif; }
.row.q { margin: 2px 0 0 -72px; letter-spacing: -.111px; }
.f3 { width: 921px; margin: 5px 0 0 -33px; padding-top: 7px; }
.b3 { margin: 24px 0 0 -36px; }
.clear { position: absolute; left: 1758px; top: 23px; width: 92px; }
.er { width: 92px; height: 84px; margin-left: 11px; padding: 14px 0 0 14px; border-radius: 40px; background: #aaa; }
.er svg { width: 62px; height: 56px; }
.clear p { width: 73px; font-size: 20px; line-height: 24px; text-align: center; color: #333; }

.scroll { display: flex; flex-direction: column; align-items: center; background: #f1f1f1; padding: 10px 0 9px; }
.scroll svg { width: 12px; height: 6px; }
.thumb { width: 21px; height: 99px; margin: 533px 0 auto; background: #c1c1c1; }

/* taskbar */
.task { display: flex; justify-content: space-between; height: 72px; border-top: 2px solid #b6b4b7; background: linear-gradient(90deg, #dcdbdc, #dfdfe2 40%, #e4dfe3 62%, #e8dde1 73%, #eddbe2 82%, #efdce3); font: 18px/23px "Open Sans", sans-serif; color: #1b1b1b; }
.tray { display: flex; align-items: center; padding: 0 30px 2px 0; }
.cloud { margin-left: 28px; }
.lang { width: 50px; margin: 2px 0 0 19px; text-align: center; letter-spacing: -.2px; }
.wifi { margin-left: 20px; }
.snd { margin-left: 12px; }
.bat { margin-left: 12px; }
.time { margin-left: 23px; text-align: right; width: 91px; white-space: nowrap; letter-spacing: -.46px; }
```
